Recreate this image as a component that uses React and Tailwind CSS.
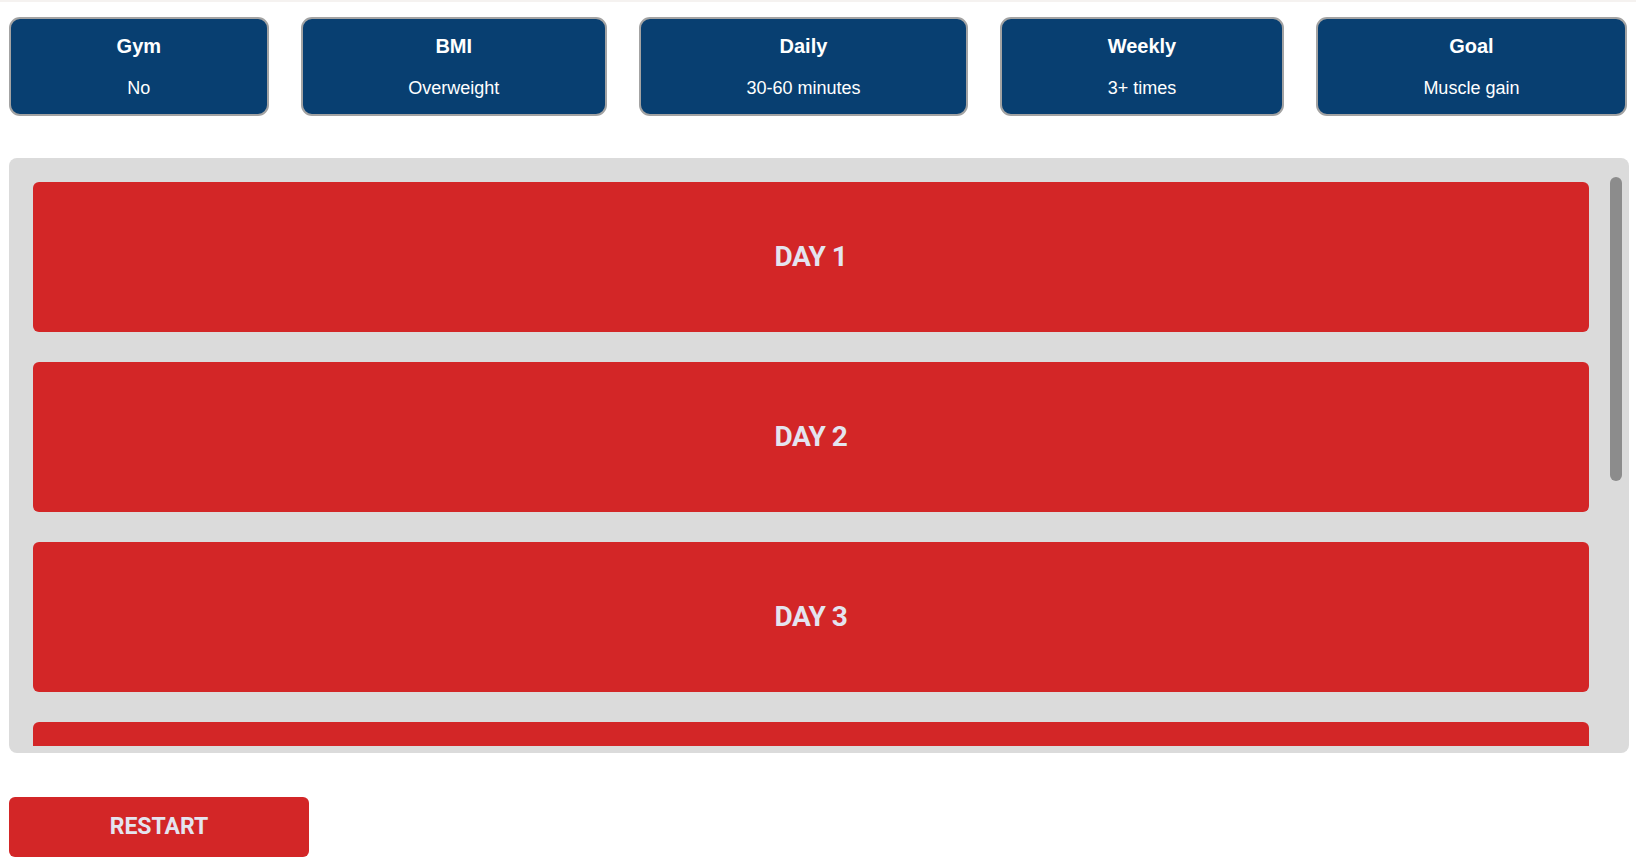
import React from 'react';

const stats = [
    { label: 'Gym', value: 'No' },
    { label: 'BMI', value: 'Overweight' },
    { label: 'Daily', value: '30-60 minutes' },
    { label: 'Weekly', value: '3+ times' },
    { label: 'Goal', value: 'Muscle gain' },
];

const days = [1, 2, 3, 4, 5, 6];

export default function App() {
    return (
        <div className="min-h-screen bg-white">
            <div className="h-[2px] bg-[#f5f2f0]" />
            <div className="pl-[9px] pr-[7px]">
                <div className="mr-[2px] flex gap-8 pt-[15px]">
                    {stats.map((s) => (
                        <div
                            key={s.label}
                            className="flex-auto rounded-[11px] border-2 border-[#a3a3a3] bg-[#083f71] px-4 pt-[15px] pb-3 text-center text-white"
                            style={{ fontFamily: '"Liberation Sans", Arial, sans-serif' }}
                        >
                            <div className="text-[20px] font-bold leading-6">{s.label}</div>
                            <div className="mt-4 text-[18px] leading-7">{s.value}</div>
                        </div>
                    ))}
                </div>

                <div className="mt-[42px] h-[595px] rounded-lg bg-[#dbdbdb] p-[7px]">
                    <div className="flex h-full">
                        <div className="flex-1 overflow-hidden pt-[17px] pl-[17px] pr-[21px]">
                            <div className="flex flex-col gap-[30px]">
                                {days.map((d) => (
                                    <div
                                        key={d}
                                        className="flex h-[150px] shrink-0 items-center justify-center rounded-md bg-[#d32627]"
                                    >
                                        <span
                                            className="text-[28px] font-bold tracking-[-0.5px] text-[#e4e4ef]"
                                            style={{ fontFamily: 'Roboto, "Noto Sans", sans-serif' }}
                                        >
                                            DAY {d}
                                        </span>
                                    </div>
                                ))}
                            </div>
                        </div>
                        <div className="w-[12px] shrink-0 py-[12px]">
                            <div className="h-[304px] rounded-full bg-[#8c8c8c]" />
                        </div>
                    </div>
                </div>

                <button
                    className="mt-[44px] flex h-[60px] w-[300px] items-center justify-center rounded-md bg-[#d32627] text-[23px] font-bold text-[#e4e4ef]"
                    style={{ fontFamily: 'Roboto, "Noto Sans", sans-serif' }}
                >
                    RESTART
                </button>
            </div>
        </div>
    );
}
